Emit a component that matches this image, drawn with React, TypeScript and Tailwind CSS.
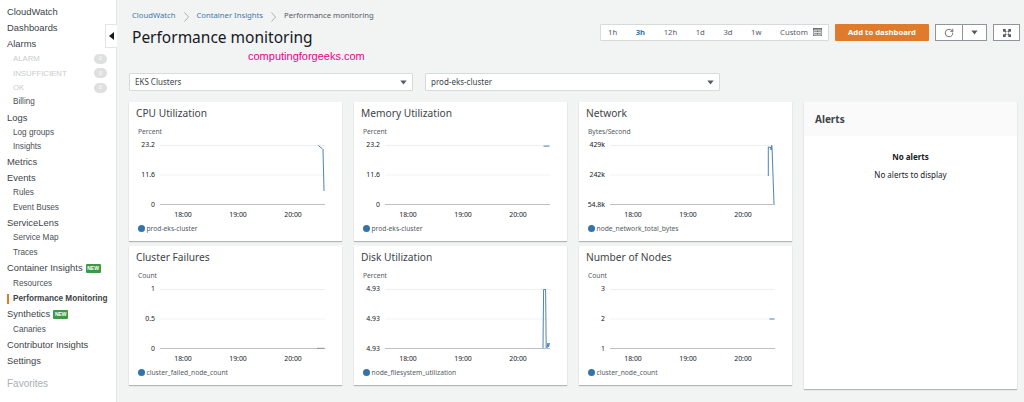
import { RotateCw } from 'lucide-react'

type NavItem = { label: string; kind: 'top' | 'sub' | 'off' | 'active'; isNew?: boolean }

const navItems: NavItem[] = [
  { label: 'CloudWatch', kind: 'top' },
  { label: 'Dashboards', kind: 'top' },
  { label: 'Alarms', kind: 'top' },
  { label: 'ALARM', kind: 'off' },
  { label: 'INSUFFICIENT', kind: 'off' },
  { label: 'OK', kind: 'off' },
  { label: 'Billing', kind: 'sub' },
  { label: 'Logs', kind: 'top' },
  { label: 'Log groups', kind: 'sub' },
  { label: 'Insights', kind: 'sub' },
  { label: 'Metrics', kind: 'top' },
  { label: 'Events', kind: 'top' },
  { label: 'Rules', kind: 'sub' },
  { label: 'Event Buses', kind: 'sub' },
  { label: 'ServiceLens', kind: 'top' },
  { label: 'Service Map', kind: 'sub' },
  { label: 'Traces', kind: 'sub' },
  { label: 'Container Insights', kind: 'top', isNew: true },
  { label: 'Resources', kind: 'sub' },
  { label: 'Performance Monitoring', kind: 'active' },
  { label: 'Synthetics', kind: 'top', isNew: true },
  { label: 'Canaries', kind: 'sub' },
  { label: 'Contributor Insights', kind: 'top' },
  { label: 'Settings', kind: 'top' },
]

type Card = { title: string; unit: string; ticks: string[]; legend: string; lines: string[]; lineColor?: string }

const cards: Card[] = [
  {
    title: 'CPU Utilization',
    unit: 'Percent',
    ticks: ['23.2', '11.6', '0'],
    legend: 'prod-eks-cluster',
    lines: ['M158.3 0.5 L162.3 3.7 L163 4.5 L164 46'],
  },
  {
    title: 'Memory Utilization',
    unit: 'Percent',
    ticks: ['23.2', '11.6', '0'],
    legend: 'prod-eks-cluster',
    lines: ['M158.5 1.2 L164.5 1'],
  },
  {
    title: 'Network',
    unit: 'Bytes/Second',
    ticks: ['429k', '242k', '54.8k'],
    legend: 'node_network_total_bytes',
    lines: ['M158.3 31 L158.3 2 L161 2.5 L161 5 L161.6 0.5 L162 2 L164 59'],
  },
  {
    title: 'Cluster Failures',
    unit: 'Count',
    ticks: ['1', '0.5', '0'],
    legend: 'cluster_failed_node_count',
    lines: ['M157 59.3 L164.5 59.3'],
    lineColor: '#8a8f94',
  },
  {
    title: 'Disk Utilization',
    unit: 'Percent',
    ticks: ['4.93', '4.93', '4.93'],
    legend: 'node_filesystem_utilization',
    lines: ['M158 59 L158.6 0.5 L160.6 0.5 L161.2 59', 'M162 59 L163 54 L163.5 58 L164.5 54'],
  },
  {
    title: 'Number of Nodes',
    unit: 'Count',
    ticks: ['3', '2', '1'],
    legend: 'cluster_node_count',
    lines: ['M159.5 30 L164.5 30'],
  },
]

function Caret({ className }: { className: string }) {
  return (
    <svg viewBox="0 0 10 7" className={className}>
      <path d="M0.5 0.5 H9.5 L5 6.5 Z" fill="currentColor" />
    </svg>
  )
}

function Chevron() {
  return (
    <svg viewBox="0 0 7 10" className="h-[10px] w-[7px] text-[#a4a9ad]">
      <path d="M1.5 0.5 L5.5 5 L1.5 9.5" fill="none" stroke="currentColor" strokeWidth="0.9" />
    </svg>
  )
}

function NewBadge() {
  return (
    <span className="ml-[3px] inline-flex h-[9px] w-[15px] items-center justify-center rounded-[1px] bg-[#3c9a46] text-[5px] font-bold leading-none text-white">
      NEW
    </span>
  )
}

function Sidebar() {
  return (
    <aside className="relative w-[117px] shrink-0 self-stretch border-r border-[#e4e6e6] bg-white pt-[4px] font-['Liberation_Sans',sans-serif]">
      {navItems.map((item) => {
        if (item.kind === 'top') {
          return (
            <div
              key={item.label}
              className={`flex h-[15.9px] items-center pl-[7px] text-[9.4px] text-[#3d4448] ${item.isNew ? 'mb-[1px]' : ''}`}
            >
              {item.label}
              {item.isNew && <NewBadge />}
            </div>
          )
        }
        if (item.kind === 'off') {
          return (
            <div key={item.label} className="flex h-[14.5px] items-center justify-between pl-[13px] pr-[9px] text-[7.8px] text-[#c9cccc]">
              {item.label}
              <span className="flex h-[10px] w-[13px] items-center justify-center rounded-full bg-[#dedfdf] text-[5px] text-white">0</span>
            </div>
          )
        }
        if (item.kind === 'active') {
          return (
            <div key={item.label} className="flex h-[14.5px] items-center pl-[13px] text-[8.2px] font-bold text-[#3d4448]">
              <span className="absolute left-[7px] h-[10px] w-[2px] bg-[#e07b2c]" />
              {item.label}
            </div>
          )
        }
        return (
          <div key={item.label} className="flex h-[14.5px] items-center pl-[13px] text-[8.2px] text-[#4a5156]">
            {item.label}
          </div>
        )
      })}
      <div className="mt-[7px] pl-[7px] text-[10px] text-[#aab0b2]">Favorites</div>

      {/* collapse tab */}
      <div className="absolute right-[-1px] top-[24px] flex h-[24px] w-[12px] items-center justify-center border-y border-l border-[#e4e6e6] bg-white">
        <span className="h-0 w-0 border-y-[4px] border-r-[5px] border-y-transparent border-r-[#16191f]" />
      </div>
    </aside>
  )
}

function Select({ label, className }: { label: string; className: string }) {
  return (
    <div className={`flex h-[18px] items-center justify-between rounded-[1px] border border-[#d5dbdb] bg-white pl-[5px] pr-[5px] text-[8px] text-[#3d4448] ${className}`}>
      {label}
      <Caret className="h-[5px] w-[7px] text-[#545b64]" />
    </div>
  )
}

function ChartCard({ card }: { card: Card }) {
  return (
    <div className="flex h-[139px] flex-col bg-white pl-[7px] pt-[4px] shadow-[0_1px_1px_rgba(0,0,0,0.25)]">
      <div className="text-[10.2px] leading-[15px] text-[#3d4448]">{card.title}</div>
      <div className="mt-[5.5px] pl-[2px] text-[6.7px] leading-[10px] text-[#545b64]">{card.unit}</div>
      <div className="mt-[8.5px] flex">
        <div className="-mt-[4px] flex h-[68px] w-[24px] flex-col justify-between pr-[5px] text-right text-[6.9px] leading-[8px] text-[#16191f]">
          {card.ticks.map((t, i) => (
            <span key={i} className="whitespace-nowrap">{t}</span>
          ))}
        </div>
        <svg width="165" height="60" viewBox="0 0 165 60" className="block overflow-visible">
          <line x1="0" y1="0.5" x2="165" y2="0.5" stroke="#eef0f0" strokeWidth="1" />
          <line x1="0" y1="30" x2="165" y2="30" stroke="#f2f3f3" strokeWidth="1" />
          <line x1="0" y1="59.5" x2="165" y2="59.5" stroke="#a9aeb2" strokeWidth="0.8" />
          {card.lines.map((d, i) => (
            <path key={i} d={d} fill="none" stroke={card.lineColor ?? '#3d76ab'} strokeWidth="0.9" />
          ))}
        </svg>
      </div>
      <div className="ml-[19.5px] mt-[1px] grid w-[165px] grid-cols-3 text-center text-[6.9px] leading-[10px] text-[#16191f]">
        <span>18:00</span>
        <span>19:00</span>
        <span>20:00</span>
      </div>
      <div className="mt-[3.5px] flex items-center gap-[2px] pl-[1.5px] text-[6.7px] leading-[10px] text-[#545b64]">
        <span className="h-[7px] w-[7px] shrink-0 rounded-full bg-[#3274ab]" />
        {card.legend}
      </div>
    </div>
  )
}

export default function App() {
  return (
    <div className="flex h-[402px] w-[1024px] overflow-hidden bg-[#f2f3f3] font-['Noto_Sans',sans-serif]">
      <Sidebar />
      <main className="relative min-w-0 flex-1 pl-[12px] pr-[4px]">
        <div className="flex h-[22px] items-end gap-[7px] pl-[3px] text-[7.7px] leading-[13px] text-[#545b64]">
          <span className="text-[#3f77ad]">CloudWatch</span>
          <Chevron />
          <span className="text-[#3f77ad]">Container Insights</span>
          <Chevron />
          <span>Performance monitoring</span>
        </div>

        <div className="mt-[2px] flex items-start justify-between">
          <h1 className="pl-[3px] pt-[1px] text-[15.5px] leading-[25px] text-[#16191f]">Performance monitoring</h1>
          <div className="flex items-center">
            <div className="flex h-[17px] w-[229px] items-center justify-between rounded-[1px] border border-[#d5dbdb] bg-white pl-[7px] pr-[6px] text-[7.7px] text-[#545b64]">
              <span>1h</span>
              <span className="font-bold text-[#2f78b5]">3h</span>
              <span>12h</span>
              <span>1d</span>
              <span>3d</span>
              <span>1w</span>
              <span className="flex items-center gap-[5px]">
                Custom
                <svg viewBox="0 0 9 8" className="h-[8px] w-[9px]">
                  <rect x="0" y="0" width="9" height="8" fill="#6b7176" />
                  <path d="M1 2h7v5H1z M3 2v5 M6 2v5 M1 4.5h7" fill="none" stroke="#fff" strokeWidth="0.7" />
                </svg>
              </span>
            </div>
            <button className="ml-[6px] h-[17px] w-[94px] rounded-[1px] bg-[#e07b2c] text-[7.7px] font-bold text-white">
              Add to dashboard
            </button>
            <div className="ml-[6px] flex h-[17px]">
              <div className="flex w-[28px] items-center justify-center border border-[#8f969b] bg-white">
                <RotateCw className="h-[10px] w-[10px] text-[#545b64]" strokeWidth={2} />
              </div>
              <div className="flex w-[24px] items-center justify-center border border-l-0 border-[#8f969b] bg-white">
                <Caret className="h-[5px] w-[7px] text-[#545b64]" />
              </div>
            </div>
            <div className="ml-[6px] flex h-[17px] w-[27px] items-center justify-center border border-[#8f969b] bg-white">
              <svg viewBox="0 0 10 10" className="h-[8px] w-[8px] text-[#545b64]">
                <path d="M0 0h4L2.8 1.2 4.6 3 3 4.6 1.2 2.8 0 4z M10 0v4L8.8 2.8 7 4.6 5.4 3l1.8-1.8L6 0z M0 10V6l1.2 1.2L3 5.4 4.6 7 2.8 8.8 4 10z M10 10H6l1.2-1.2L5.4 7 7 5.4l1.8 1.8L10 6z" fill="currentColor" />
              </svg>
            </div>
          </div>
        </div>

        {/* watermark */}
        <span className="absolute left-[131px] top-[49px] font-['Liberation_Sans',sans-serif] text-[11px] leading-[14px] text-[#ec008c]">
          computingforgeeks.com
        </span>

        <div className="mt-[23px] flex gap-[12px]">
          <Select label="EKS Clusters" className="w-[284px]" />
          <Select label="prod-eks-cluster" className="w-[295px]" />
        </div>

        <div className="mt-[11px] flex gap-[12px]">
          <div className="grid w-[663px] grid-cols-3 gap-x-[12px] gap-y-[5px] self-start">
            {cards.map((card) => (
              <ChartCard key={card.title} card={card} />
            ))}
          </div>
          <div className="flex h-[287px] w-[213px] flex-col bg-white shadow-[0_1px_1px_rgba(0,0,0,0.25)]">
            <div className="flex h-[34px] items-center bg-[#fafafa] pl-[11px] text-[10px] font-bold text-[#3d4448]">
              Alerts
            </div>
            <div className="pt-[15px] text-center text-[8px] leading-[12px] text-[#16191f]">
              <div className="font-bold">No alerts</div>
              <div className="mt-[6px]">No alerts to display</div>
            </div>
          </div>
        </div>
      </main>
    </div>
  )
}
